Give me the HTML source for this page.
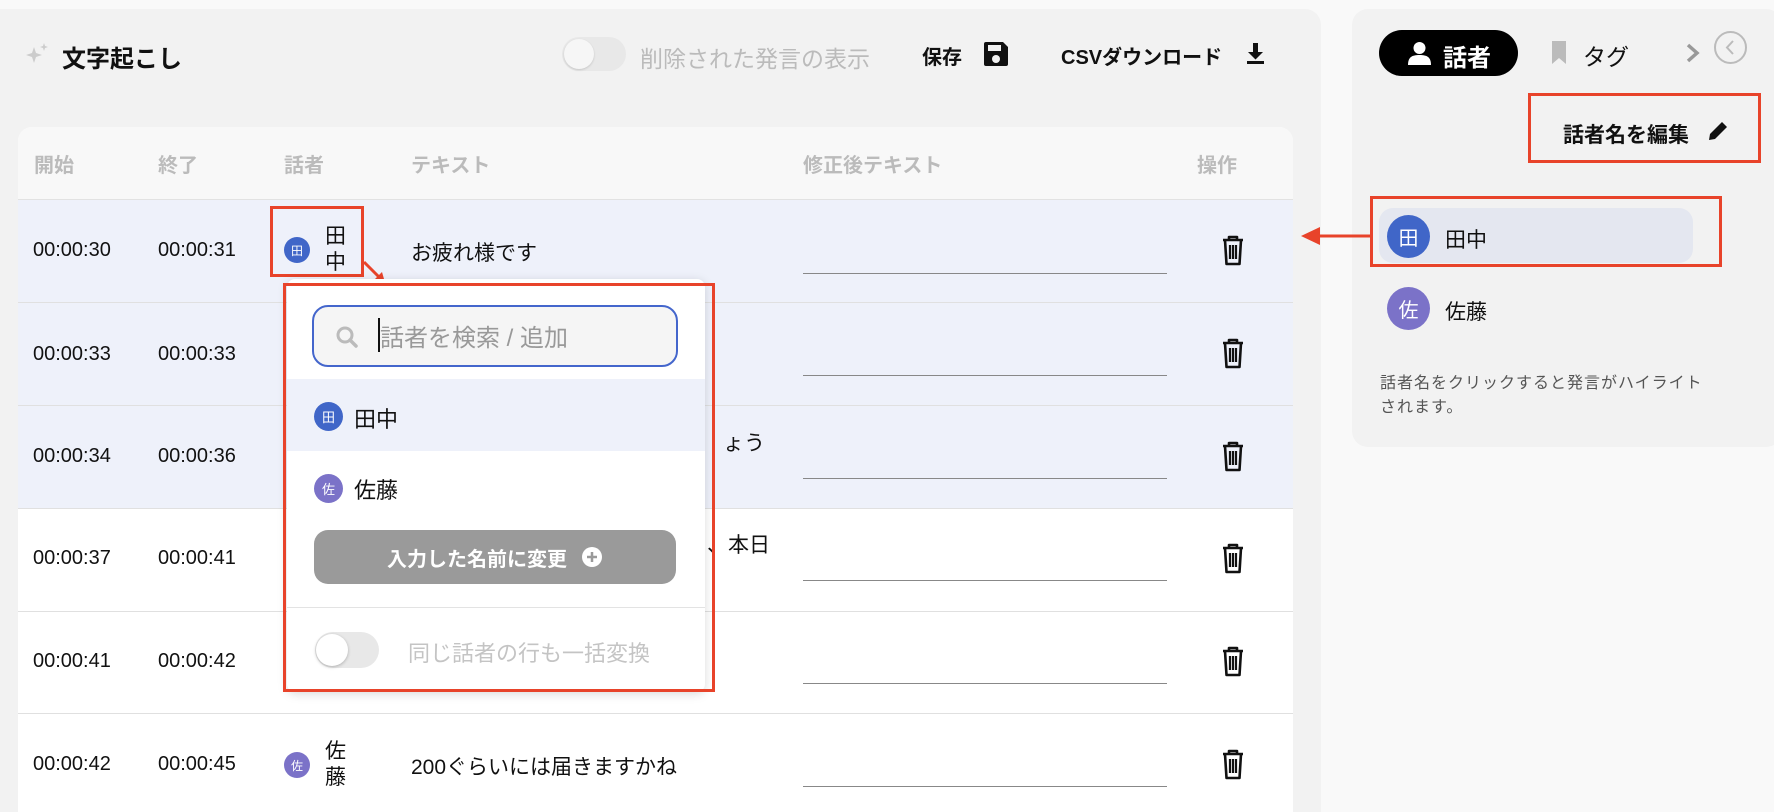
<!DOCTYPE html>
<html><head><meta charset="utf-8"><style>
*{box-sizing:border-box;margin:0;padding:0}
html,body{width:1774px;height:812px;overflow:hidden}
body{background:#f9f9f9;font-family:"Liberation Sans","Noto Sans CJK JP",sans-serif;position:relative;color:#111}
.a{position:absolute}
.main{left:0;top:9px;width:1321px;height:803px;background:#f2f2f2;border-radius:0 16px 0 0}
.card{left:18px;top:127px;width:1275px;height:685px;background:#fff;border-radius:14px 14px 0 0;overflow:hidden}
.hd{left:0;top:0;width:100%;height:73px;background:#f8f8f8;border-bottom:1px solid #e2e2e2}
.th{top:22px;font-size:20px;font-weight:bold;color:#bbb}
.row{left:0;width:100%;height:103px;border-bottom:1px solid #e0e0e0}
.t{font-size:20px;color:#111}
.av{border-radius:50%;color:#fff;display:flex;align-items:center;justify-content:center}
.red{border:3px solid #e8432a}
.ul{height:1px;background:#888;width:364px}
</style></head><body>
<div class="a main"></div>
<svg class="a" style="left:26px;top:43px" width="24" height="22" viewBox="0 0 24 22"><path d="M8 4l2 6 6 2-6 2-2 6-2-6-6-2 6-2z" fill="#ccc"/><path d="M18 0l1 3 3 1-3 1-1 3-1-3-3-1 3-1z" fill="#ccc"/></svg>
<div class="a" style="left:62px;top:39px;font-size:24px;font-weight:bold">文字起こし</div>
<div class="a" style="left:562px;top:37px;width:64px;height:34px;border-radius:17px;background:#e8e8e8"><div class="a" style="left:2px;top:2px;width:30px;height:30px;border-radius:50%;background:#f6f6f6;box-shadow:0 1px 2px rgba(0,0,0,.15)"></div></div>
<div class="a" style="left:640px;top:40px;font-size:23px;color:#bbb">削除された発言の表示</div>
<div class="a" style="left:922px;top:41px;font-size:20px;font-weight:bold">保存</div>
<svg class="a" style="left:982px;top:40px" width="28" height="28" viewBox="0 0 28 28"><path d="M2 4a2 2 0 012-2h17l5 5v17a2 2 0 01-2 2H4a2 2 0 01-2-2z" fill="#111"/><rect x="6" y="5" width="13" height="6" fill="#f2f2f2"/><circle cx="14" cy="19" r="4" fill="#f2f2f2"/></svg>
<div class="a" style="left:1061px;top:41px;font-size:20px;font-weight:bold">CSVダウンロード</div>
<svg class="a" style="left:1246px;top:43px" width="19" height="22" viewBox="0 0 19 22"><path d="M7 0h5v9h5l-7.5 7.5L2 9h5z" fill="#111"/><rect x="1" y="18" width="17" height="3" fill="#111"/></svg>

<div class="a card">
 <div class="a hd"></div>
 <div class="a th" style="left:16px">開始</div>
 <div class="a th" style="left:140px">終了</div>
 <div class="a th" style="left:266px">話者</div>
 <div class="a th" style="left:393px">テキスト</div>
 <div class="a th" style="left:785px">修正後テキスト</div>
 <div class="a th" style="left:1179px">操作</div>
 <div class="a row" style="top:73px;background:#eef1fa"></div>
 <div class="a row" style="top:176px;background:#eef1fa"></div>
 <div class="a row" style="top:279px;background:#eef1fa"></div>
 <div class="a row" style="top:382px"></div>
 <div class="a row" style="top:484px"></div>
 <div class="a row" style="top:586px;border:none"></div>
</div>
<div class="a t" style="left:33px;top:239px">00:00:30</div><div class="a t" style="left:158px;top:239px">00:00:31</div>
<div class="a t" style="left:33px;top:343px">00:00:33</div><div class="a t" style="left:158px;top:343px">00:00:33</div>
<div class="a t" style="left:33px;top:445px">00:00:34</div><div class="a t" style="left:158px;top:445px">00:00:36</div>
<div class="a t" style="left:33px;top:547px">00:00:37</div><div class="a t" style="left:158px;top:547px">00:00:41</div>
<div class="a t" style="left:33px;top:650px">00:00:41</div><div class="a t" style="left:158px;top:650px">00:00:42</div>
<div class="a t" style="left:33px;top:753px">00:00:42</div><div class="a t" style="left:158px;top:753px">00:00:45</div>
<div class="a av" style="left:284px;top:237px;width:26px;height:26px;background:#4066c8;font-size:12px">田</div>
<div class="a t" style="left:325px;top:224px;line-height:26px;width:22px;font-size:21px">田<br>中</div>
<div class="a t" style="left:411px;top:237px;font-size:21px">お疲れ様です</div>
<div class="a t" style="left:723px;top:427px;font-size:21px">ょう</div>
<div class="a t" style="left:707px;top:529px;font-size:21px">、本日</div>
<div class="a av" style="left:284px;top:752px;width:26px;height:26px;background:#7b72c8;font-size:12px">佐</div>
<div class="a t" style="left:325px;top:739px;line-height:26px;width:22px;font-size:21px">佐<br>藤</div>
<div class="a t" style="left:411px;top:751px;font-size:21px">200ぐらいには届きますかね</div>
<div class="a ul" style="left:803px;top:273px"></div>
<div class="a ul" style="left:803px;top:375px"></div>
<div class="a ul" style="left:803px;top:478px"></div>
<div class="a ul" style="left:803px;top:580px"></div>
<div class="a ul" style="left:803px;top:683px"></div>
<div class="a ul" style="left:803px;top:786px"></div>
<svg width="0" height="0" style="position:absolute"><defs><g id="tr"><path d="M3 6h20M9 6V3h8v3M5 6l1.5 24h13L21 6" fill="none" stroke="#111" stroke-width="2.6" stroke-linejoin="round"/><path d="M10 11v14M13 11v14M16 11v14" stroke="#111" stroke-width="2.2"/></g></defs></svg>
<svg class="a" style="left:1220px;top:234px" width="26" height="32"><use href="#tr"/></svg>
<svg class="a" style="left:1220px;top:337px" width="26" height="32"><use href="#tr"/></svg>
<svg class="a" style="left:1220px;top:440px" width="26" height="32"><use href="#tr"/></svg>
<svg class="a" style="left:1220px;top:542px" width="26" height="32"><use href="#tr"/></svg>
<svg class="a" style="left:1220px;top:645px" width="26" height="32"><use href="#tr"/></svg>
<svg class="a" style="left:1220px;top:748px" width="26" height="32"><use href="#tr"/></svg>
<div class="a red" style="left:270px;top:206px;width:94px;height:71px"></div>
<svg class="a" style="left:362px;top:260px" width="30" height="30"><path d="M2 2l16 16" stroke="#e8432a" stroke-width="3"/><path d="M10 22l14 4-4-14z" fill="#e8432a"/></svg>

<div class="a" style="left:287px;top:279px;width:418px;height:413px;background:#fff;border-radius:8px;box-shadow:0 2px 10px rgba(0,0,0,.15)"></div>
<div class="a" style="left:287px;top:379px;width:418px;height:72px;background:#eef1fa"></div>
<div class="a" style="left:312px;top:305px;width:366px;height:62px;border:2.5px solid #4466cc;border-radius:16px;background:#f5f5f5"></div>
<svg class="a" style="left:335px;top:325px" width="24" height="24"><circle cx="10" cy="10" r="7" fill="none" stroke="#bbb" stroke-width="3"/><path d="M15 15l6 6" stroke="#bbb" stroke-width="3.5" stroke-linecap="round"/></svg>
<div class="a" style="left:378px;top:318px;width:2px;height:34px;background:#111"></div>
<div class="a" style="left:380px;top:318px;font-size:24px;color:#999">話者を検索 / 追加</div>
<div class="a av" style="left:314px;top:402px;width:29px;height:29px;background:#4066c8;font-size:13px">田</div>
<div class="a" style="left:354px;top:402px;font-size:22px">田中</div>
<div class="a av" style="left:314px;top:474px;width:29px;height:29px;background:#7b72c8;font-size:13px">佐</div>
<div class="a" style="left:354px;top:473px;font-size:22px">佐藤</div>
<div class="a" style="left:314px;top:530px;width:362px;height:54px;background:#9a9a9a;border-radius:14px;color:#fff;font-size:20px;font-weight:bold;display:flex;align-items:center;justify-content:center;gap:14px">入力した名前に変更 <svg width="22" height="22"><circle cx="11" cy="11" r="10" fill="#fff"/><path d="M11 6v10M6 11h10" stroke="#9a9a9a" stroke-width="2.5"/></svg></div>
<div class="a" style="left:287px;top:607px;width:418px;height:1px;background:#e3e3e3"></div>
<div class="a" style="left:315px;top:632px;width:64px;height:36px;border-radius:18px;background:#e8e8e8"><div class="a" style="left:1px;top:2px;width:32px;height:32px;border-radius:50%;background:#fff;box-shadow:0 1px 3px rgba(0,0,0,.25)"></div></div>
<div class="a" style="left:408px;top:636px;font-size:22px;color:#c4c4c4">同じ話者の行も一括変換</div>
<div class="a red" style="left:283px;top:283px;width:432px;height:409px"></div>

<div class="a" style="left:1352px;top:9px;width:430px;height:438px;background:#f2f2f2;border-radius:16px"></div>
<div class="a" style="left:1379px;top:30px;width:139px;height:46px;background:#000;border-radius:23px"></div>
<svg class="a" style="left:1407px;top:41px" width="25" height="24" viewBox="0 0 25 24"><circle cx="12.5" cy="7" r="6" fill="#fff"/><path d="M1 24c0-8 4-10 11.5-10S24 16 24 24z" fill="#fff"/></svg>
<div class="a" style="left:1443px;top:38px;font-size:24px;color:#fff;font-weight:bold">話者</div>
<svg class="a" style="left:1552px;top:41px" width="14" height="23"><path d="M0 0h14v23l-7-6-7 6z" fill="#bbb"/></svg>
<div class="a" style="left:1583px;top:38px;font-size:23px">タグ</div>
<svg class="a" style="left:1685px;top:43px" width="16" height="20"><path d="M3 2l9 8-9 8" fill="none" stroke="#999" stroke-width="3.5"/></svg>
<svg class="a" style="left:1713px;top:30px" width="35" height="35"><circle cx="17.5" cy="17.5" r="15.5" fill="none" stroke="#bbb" stroke-width="2"/><path d="M20 11l-6 6.5 6 6.5" fill="none" stroke="#bbb" stroke-width="2"/></svg>
<div class="a" style="left:1563px;top:119px;font-size:21px;font-weight:bold">話者名を編集</div>
<svg class="a" style="left:1707px;top:120px" width="22" height="22"><path d="M2 20l1-6L15 2l5 5L8 19z" fill="#111"/></svg>
<div class="a red" style="left:1528px;top:93px;width:233px;height:70px"></div>
<div class="a" style="left:1379px;top:208px;width:314px;height:55px;background:#e4e7f0;border-radius:14px"></div>
<div class="a av" style="left:1387px;top:215px;width:43px;height:43px;background:#4066c8;font-size:20px">田</div>
<div class="a" style="left:1445px;top:224px;font-size:21px">田中</div>
<div class="a av" style="left:1387px;top:287px;width:43px;height:43px;background:#7b72c8;font-size:20px">佐</div>
<div class="a" style="left:1445px;top:296px;font-size:21px">佐藤</div>
<div class="a red" style="left:1370px;top:196px;width:352px;height:71px"></div>
<svg class="a" style="left:1300px;top:225px" width="72" height="22"><path d="M18 11h54" stroke="#e8432a" stroke-width="3"/><path d="M1 11l19-9v18z" fill="#e8432a"/></svg>
<div class="a" style="left:1380px;top:372px;font-size:16px;color:#555;line-height:24px;width:390px;letter-spacing:1px;white-space:nowrap">話者名をクリックすると発言がハイライト<br>されます。</div>
</body></html>
